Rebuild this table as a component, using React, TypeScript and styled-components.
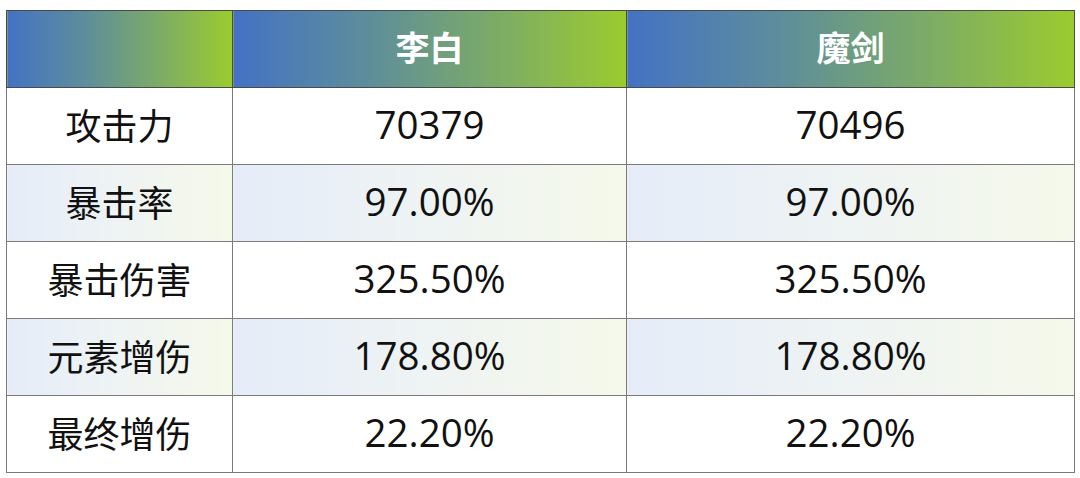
import React from "react";
import styled, { createGlobalStyle } from "styled-components";

const rows = [
  { label: "攻击力", a: "70379", b: "70496" },
  { label: "暴击率", a: "97.00%", b: "97.00%" },
  { label: "暴击伤害", a: "325.50%", b: "325.50%" },
  { label: "元素增伤", a: "178.80%", b: "178.80%" },
  { label: "最终增伤", a: "22.20%", b: "22.20%" },
];

const GlobalStyle = createGlobalStyle`
  html, body {
    margin: 0;
    padding: 0;
    background: #ffffff;
  }
  body {
    font-family: "Open Sans", "Noto Sans CJK SC", sans-serif;
  }
`;

const Page = styled.div`
  padding: 10px 6px 0 6px;
  width: 1080px;
  height: 478px;
  box-sizing: border-box;
`;

const Table = styled.table`
  width: 1068px;
  border-collapse: collapse;
  table-layout: fixed;
  border: 1px solid #555;
`;

const HeadCell = styled.th`
  height: 70px;
  padding: 0 0 6px 0;
  background: linear-gradient(to right, #4472c4 0%, #5e8e9a 35%, #7fae62 70%, #9bcb2e 100%);
  border: 1px solid #4a4a4a;
  color: #ffffff;
  font-family: "Noto Sans CJK SC", sans-serif;
  font-size: 34px;
  font-weight: 700;
  text-align: center;
`;

const Row = styled.tr<{ $shaded: boolean }>`
  td {
    background: ${(p) =>
      p.$shaded
        ? "linear-gradient(to right, #e5ecf8 0%, #eef3f3 50%, #f5f9ea 100%)"
        : "#ffffff"};
  }
`;

const Cell = styled.td<{ $cjk?: boolean }>`
  height: 72px;
  padding: 0 0 4px 0;
  border: 1px solid #7a7a7a;
  text-align: center;
  color: #111;
  font-size: ${(p) => (p.$cjk ? "36px" : "38.5px")};
  font-family: ${(p) =>
    p.$cjk ? '"Noto Sans CJK SC", sans-serif' : '"Open Sans", "Noto Sans", sans-serif'};
`;

export default function App() {
  return (
    <>
      <GlobalStyle />
      <Page>
        <Table>
          <colgroup>
            <col style={{ width: 226 }} />
            <col style={{ width: 394 }} />
            <col style={{ width: 448 }} />
          </colgroup>
          <thead>
            <tr>
              <HeadCell />
              <HeadCell>李白</HeadCell>
              <HeadCell>魔剑</HeadCell>
            </tr>
          </thead>
          <tbody>
            {rows.map((r, i) => (
              <Row key={r.label} $shaded={i % 2 === 1}>
                <Cell $cjk>{r.label}</Cell>
                <Cell>{r.a}</Cell>
                <Cell>{r.b}</Cell>
              </Row>
            ))}
          </tbody>
        </Table>
      </Page>
    </>
  );
}
